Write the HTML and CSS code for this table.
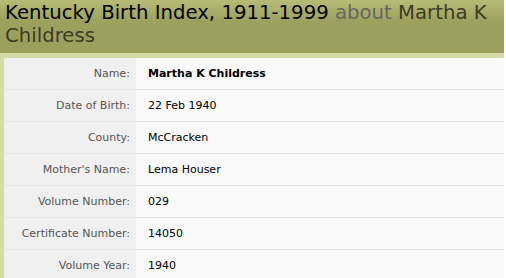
FILE: index.html
```
<!DOCTYPE html>
<html>
<head>
<meta charset="utf-8">
<link rel="stylesheet" href="styles.css">
</head>
<body>
<div class="page">
  <h1 class="title">Kentucky Birth Index, 1911-1999 <span class="about">about</span> <span class="who">Martha K Childress</span></h1>
  <div class="panel">
    <table class="rec">
      <tr><th>Name:</th><td class="strong">Martha K Childress</td></tr>
      <tr><th>Date of Birth:</th><td>22 Feb 1940</td></tr>
      <tr><th>County:</th><td>McCracken</td></tr>
      <tr><th>Mother's Name:</th><td>Lema Houser</td></tr>
      <tr><th>Volume Number:</th><td>029</td></tr>
      <tr><th>Certificate Number:</th><td>14050</td></tr>
      <tr><th>Volume Year:</th><td>1940</td></tr>
    </table>
  </div>
</div>
</body>
</html>
```
FILE: styles.css
```
html, body { margin: 0; padding: 0; background: #fff; }
.page { width: 504px; }
.title {
  margin: 0;
  padding: 1px 5px 6px 5px;
  font-family: "DejaVu Sans", sans-serif;
  font-weight: normal;
  font-size: 19.7px;
  line-height: 23px;
  color: #000;
  background: linear-gradient(#b6bc76, #9ca25e 40%, #9aa05c);
}
.about { color: #666; }
.who { color: #3c3c24; }
.panel {
  background: #d5dca8;
  padding: 5px 0 0 4px;
}
.rec {
  width: 100%;
  border-collapse: collapse;
  font-family: "DejaVu Sans", sans-serif;
  font-size: 11px;
}
.rec th, .rec td {
  height: 31px;
  padding: 0 12px;
  border-bottom: 1px solid #e4e4e4;
  white-space: nowrap;
}
.rec th {
  width: 126px;
  text-align: right;
  font-weight: normal;
  color: #555;
  background: #f0f0f0;
  padding-left: 0;
  padding-right: 6px;
}
.rec td {
  background: #fafafa;
  color: #000;
}
.rec td.strong { font-weight: bold; }
```
